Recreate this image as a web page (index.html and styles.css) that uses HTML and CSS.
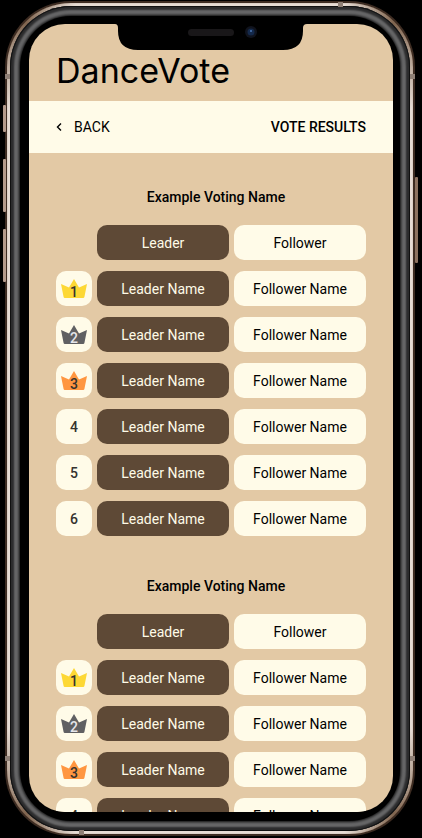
FILE: index.html
```html
<!DOCTYPE html>
<html lang="en">
<head>
<meta charset="utf-8">
<meta name="viewport" content="width=device-width, initial-scale=1">
<title>DanceVote</title>
<link rel="stylesheet" href="styles.css">
</head>
<body>
<svg class="defs" aria-hidden="true">
  <symbol id="crown" viewBox="0 0 26 19"><path d="M0 5 8 8.500 13 0l5 8.500L26 5l-2.600 13q-.2 1-1.200 1H3.800q-1 0-1.200-1z"/></symbol>
</svg>
<div class="phone">
  <span class="key key-mute"></span>
  <span class="key key-up"></span>
  <span class="key key-down"></span>
  <span class="key key-power"></span>
  <span class="seam seam-top"></span>
  <span class="seam seam-bottom"></span>
  <span class="seam seam-lt"></span>
  <span class="seam seam-rt"></span>
  <span class="seam seam-lb"></span>
  <span class="seam seam-rb"></span>
  <div class="rim"><div class="band"><div class="bezel">
    <div class="screen">
      <svg class="notch" viewBox="0 0 192 27" aria-hidden="true">
        <path d="M0 0Q3 0 3 4v3Q3 26 23 26H168Q188 26 188 7V4q0-4 4-4z"/>
        <rect class="speaker" x="73" y="5" width="46" height="7" rx="3.500"/>
        <circle class="lens" cx="136" cy="8" r="6"/>
        <circle class="iris" cx="136" cy="8" r="3.500"/>
        <circle class="glint" cx="136" cy="7" r="1"/>
      </svg>
      <header class="brand"><h1>DanceVote</h1></header>
      <nav class="bar">
        <a class="back" href="#"><svg viewBox="0 0 6 8" aria-hidden="true"><path d="M5 .5 1.500 4 5 7.500"/></svg>BACK</a>
        <span class="page-name">VOTE RESULTS</span>
      </nav>
      <main>
        <section>
          <h2>Example Voting Name</h2>
          <table>
            <thead><tr><td class="rank-col"></td><th class="leader">Leader</th><th class="follower">Follower</th></tr></thead>
            <tbody>
              <tr><td class="rank"><div class="crown gold"><svg aria-hidden="true"><use href="#crown"/></svg><span>1</span></div></td><td class="leader">Leader Name</td><td class="follower">Follower Name</td></tr>
              <tr><td class="rank"><div class="crown silver"><svg aria-hidden="true"><use href="#crown"/></svg><span>2</span></div></td><td class="leader">Leader Name</td><td class="follower">Follower Name</td></tr>
              <tr><td class="rank"><div class="crown bronze"><svg aria-hidden="true"><use href="#crown"/></svg><span>3</span></div></td><td class="leader">Leader Name</td><td class="follower">Follower Name</td></tr>
              <tr><td class="rank">4</td><td class="leader">Leader Name</td><td class="follower">Follower Name</td></tr>
              <tr><td class="rank">5</td><td class="leader">Leader Name</td><td class="follower">Follower Name</td></tr>
              <tr><td class="rank">6</td><td class="leader">Leader Name</td><td class="follower">Follower Name</td></tr>
            </tbody>
          </table>
        </section>
        <section>
          <h2>Example Voting Name</h2>
          <table>
            <thead><tr><td class="rank-col"></td><th class="leader">Leader</th><th class="follower">Follower</th></tr></thead>
            <tbody>
              <tr><td class="rank"><div class="crown gold"><svg aria-hidden="true"><use href="#crown"/></svg><span>1</span></div></td><td class="leader">Leader Name</td><td class="follower">Follower Name</td></tr>
              <tr><td class="rank"><div class="crown silver"><svg aria-hidden="true"><use href="#crown"/></svg><span>2</span></div></td><td class="leader">Leader Name</td><td class="follower">Follower Name</td></tr>
              <tr><td class="rank"><div class="crown bronze"><svg aria-hidden="true"><use href="#crown"/></svg><span>3</span></div></td><td class="leader">Leader Name</td><td class="follower">Follower Name</td></tr>
              <tr><td class="rank">4</td><td class="leader">Leader Name</td><td class="follower">Follower Name</td></tr>
            </tbody>
          </table>
        </section>
      </main>
    </div>
  </div></div></div>
</div>
</body>
</html>
```
FILE: styles.css
```css
* { box-sizing: border-box; }

body {
  margin: 0;
  height: 100vh;
  padding: 1px 7px 2px 5px;
  background: #000;
  color: #000;
  font: 14px/20px Roboto, sans-serif;
  overflow: hidden;
}

.defs { display: none; }

/* Phone shell: nested layers from the outer edge inwards */
.phone {
  position: relative;
  height: 100%;
  padding: 2px;
  border-radius: 66px;
  background: #3d2c22;
}
.rim {
  height: 100%;
  padding: 3px;
  border-radius: 64px;
  background: conic-gradient(#e6dcd4 18deg, #80654f 25deg, #e6dcd4 33deg, #e6dcd4 147deg, #80654f 155deg, #e6dcd4 162deg, #e6dcd4 198deg, #80654f 205deg, #e6dcd4 213deg, #e6dcd4 327deg, #80654f 335deg, #e6dcd4 342deg);
  box-shadow: inset 0 0 1px 0 #80654f;
}
.band {
  height: 100%;
  padding: 10px;
  border-radius: 61px;
  background: #0a0a0a;
  box-shadow: inset 0 0 0 1px #111, inset 0 0 2px 4px #2b2b2c, inset 0 0 3px 9px #69696a;
}
.bezel {
  height: 100%;
  padding: 8px 7px 9px 9px;
  border-radius: 51px;
  background: #000;
}
.screen {
  position: relative;
  height: 100%;
  border-radius: 36px;
  background: #e3c9a5;
  overflow: hidden;
}

.key {
  position: absolute;
  left: -2px;
  width: 3px;
  border-radius: 1px;
  background: #b39a8b;
}
.key-mute { top: 104px; height: 27px; }
.key-up { top: 158px; height: 53px; }
.key-down { top: 228px; height: 53px; }
.key-power { top: 176px; left: auto; right: -3px; height: 86px; background: #8c7260; }

.seam { position: absolute; z-index: 1; width: 5px; height: 5px; background: #8f8076; }
.seam-top { top: 1px; right: 72px; }
.seam-bottom { bottom: 1px; left: 74px; }
.seam-lt { left: 0; top: 73px; }
.seam-rt { right: 0; top: 73px; }
.seam-lb { left: 0; bottom: 75px; }
.seam-rb { right: 0; bottom: 75px; }

.notch {
  position: absolute;
  top: 0;
  left: 50%;
  width: 192px;
  height: 27px;
  margin-left: -96px;
}
.speaker { fill: #191719; }
.lens { fill: #10131d; }
.iris { fill: #14294b; }
.glint { fill: #4a76b4; }

/* App */
.brand { padding: 25px 27px 8px; }
h1 {
  margin: 0;
  font: 400 34px/44px Inter, sans-serif;
}

.bar {
  display: flex;
  align-items: center;
  justify-content: space-between;
  height: 52px;
  padding: 0 27px;
  background: #fffbe8;
}
.back {
  display: flex;
  align-items: center;
  gap: 12px;
  color: inherit;
  text-decoration: none;
}
.back svg {
  width: 6px;
  height: 8px;
  fill: none;
  stroke: #000;
  stroke-width: 1.4;
}
.page-name { font-weight: 500; }

main { padding: 34px 22px 0; }
section { margin-bottom: 29px; }
h2 {
  margin: 0 0 7px;
  padding-left: 10px;
  font-size: 14px;
  line-height: 20px;
  font-weight: 500;
  text-align: center;
}

table {
  width: 100%;
  table-layout: fixed;
  border-spacing: 5px 11px;
}
th, td {
  height: 35px;
  padding: 0;
  border-radius: 10px;
  font-weight: 400;
  text-align: center;
}
.rank-col, .rank { width: 36px; }
.rank { background: #fffbe8; color: #35322e; font-weight: 500; }
.leader { background: #5e4936; color: #fffbe8; }
.follower { background: #fffbe8; }

/* The number is stacked over the lower half of the crown */
.crown {
  display: grid;
  justify-items: center;
}
.crown > * { grid-area: 1 / 1; }
.crown svg {
  width: 26px;
  height: 19px;
}
.crown span {
  position: relative;
  padding-top: 5px;
  line-height: 16px;
  margin-bottom: -2px;
}
.gold { fill: #fdd835; }
.silver { fill: #606062; color: #e6e6ea; }
.bronze { fill: #ff9640; }
```
